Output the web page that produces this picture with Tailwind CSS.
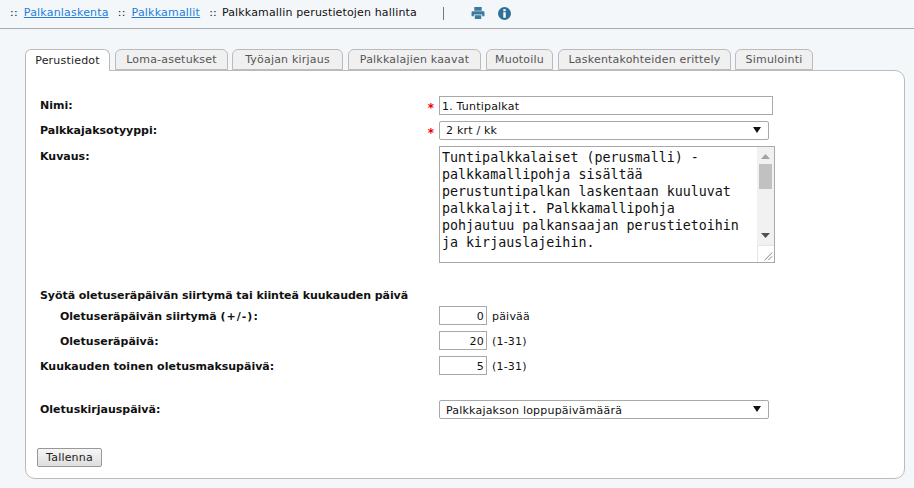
<!DOCTYPE html>
<html lang="fi">
<head>
  <meta charset="UTF-8" />
  <title>Palkkamallin perustietojen hallinta</title>
  <script src="https://cdn.jsdelivr.net/npm/@tailwindcss/browser@4"></script>
</head>
<body class="bg-[#f4f7fa] text-[#111] font-['DejaVu_Sans',sans-serif] text-[11px] tracking-[0.2px] w-[914px] h-[488px] overflow-hidden">

  <!-- Breadcrumb bar -->
  <header class="h-[29px] border-b border-[#aaa] flex items-center pl-[10px] pb-[3px] pt-[1px]">
    <span>::</span>
    <a href="#" class="ml-[6px] text-[#1f7fd6] underline">Palkanlaskenta</a>
    <span class="ml-[9px]">::</span>
    <a href="#" class="ml-[6px] text-[#1f7fd6] underline">Palkkamallit</a>
    <span class="ml-[9px]">::</span>
    <span class="ml-[5px] tracking-[0.15px]">Palkkamallin perustietojen hallinta</span>
    <span class="ml-[26px] w-px h-[13px] bg-[#777]"></span>
    <svg class="ml-[27px]" width="14" height="12" viewBox="0 0 14 13"><path fill="#3a7aa0" d="M3 0h8v4H3zM1 4.500h12a1 1 0 0 1 1 1V10h-2.500V8h-9v2H0V5.500a1 1 0 0 1 1-1zM3.500 9h7v4h-7z"/></svg>
    <svg class="ml-[13px]" width="13" height="13" viewBox="0 0 13 13"><circle cx="6.500" cy="6.500" r="6.500" fill="#2f7099"/><rect x="5.300" y="2.200" width="2.400" height="2" fill="#fff"/><rect x="5.300" y="5.200" width="2.400" height="5.500" fill="#fff"/></svg>
  </header>

  <main class="pl-[25px] pr-[9px] pt-[20px]">
    <!-- Tabs -->
    <nav class="flex h-[21px] relative z-10">
      <a class="w-[85px] h-[22px] pt-[2px] flex items-center justify-center bg-white border border-b-0 border-[#bbb] rounded-t-[6px] text-[#222]">Perustiedot</a>
      <a class="ml-[5px] w-[113px] h-[21px] pt-[2px] flex items-center justify-center bg-[#f0f0f0] border border-[#bbb] rounded-t-[6px] text-[#555]">Loma-asetukset</a>
      <a class="ml-[4px] w-[111px] h-[21px] pt-[2px] flex items-center justify-center bg-[#f0f0f0] border border-[#bbb] rounded-t-[6px] text-[#555]">Työajan kirjaus</a>
      <a class="ml-[5px] w-[133px] h-[21px] pt-[2px] flex items-center justify-center bg-[#f0f0f0] border border-[#bbb] rounded-t-[6px] text-[#555]">Palkkalajien kaavat</a>
      <a class="ml-[5px] w-[67px] h-[21px] pt-[2px] flex items-center justify-center bg-[#f0f0f0] border border-[#bbb] rounded-t-[6px] text-[#555]">Muotoilu</a>
      <a class="ml-[5px] w-[173px] h-[21px] pt-[2px] flex items-center justify-center bg-[#f0f0f0] border border-[#bbb] rounded-t-[6px] text-[#555]">Laskentakohteiden erittely</a>
      <a class="ml-[4px] w-[78px] h-[21px] pt-[2px] flex items-center justify-center bg-[#f0f0f0] border border-[#bbb] rounded-t-[6px] text-[#555]">Simulointi</a>
    </nav>

    <!-- Panel -->
    <form class="h-[409px] bg-white border border-[#bbb] rounded-b-[10px] rounded-tr-[10px] pl-[14px] pr-[14px] pt-[25px]">
      <div class="flex items-center h-[19px]">
        <label class="w-[399px] pt-[3px] font-bold tracking-normal flex justify-between pr-[5px]">Nimi:<span class="text-[12px] text-[#e00] mt-[1px]">*</span></label>
        <input value="1. Tuntipalkat" class="w-[334px] h-[19px] border border-[#a9a9a9] px-[2px] pt-[1px] outline-none" />
      </div>

      <div class="flex items-center h-[19px] mt-[6px]">
        <label class="w-[399px] pt-[3px] font-bold tracking-normal flex justify-between pr-[5px]">Palkkajaksotyyppi:<span class="text-[12px] text-[#e00] mt-[1px]">*</span></label>
        <div class="relative w-[330px] h-[19px]">
          <select class="appearance-none w-full h-full border border-[#a9a9a9] rounded-[2px] pl-[6px] pt-[1px] bg-white outline-none"><option>2 krt / kk</option></select>
          <svg class="absolute right-[8px] top-[6px]" width="8" height="6" viewBox="0 0 8 6"><path d="M0 0h8L4 6z" fill="#111"/></svg>
        </div>
      </div>

      <div class="flex mt-[6px] h-[117px]">
        <label class="w-[399px] font-bold tracking-normal pt-[3px]">Kuvaus:</label>
        <div class="relative w-[336px] h-[117px]">
          <textarea class="block w-full h-full border border-[#a9a9a9] pl-[2px] pt-[2px] pr-[30px] resize-none overflow-hidden outline-none tracking-normal font-['DejaVu_Sans_Mono',monospace] text-[13.33px] leading-[17px]">Tuntipalkkalaiset (perusmalli) - palkkamallipohja sisältää perustuntipalkan laskentaan kuuluvat palkkalajit. Palkkamallipohja pohjautuu palkansaajan perustietoihin ja kirjauslajeihin.</textarea>
          <!-- scrollbar -->
          <div class="absolute right-[1px] top-[1px] w-[17px] h-[98px] bg-[#f1f1f1]">
            <svg class="absolute left-[4px] top-[7px]" width="9" height="5" viewBox="0 0 9 5"><path d="M4.500 0L9 5H0z" fill="#a3a3a3"/></svg>
            <div class="absolute left-[2px] top-[17px] w-[13px] h-[25px] bg-[#c1c1c1]"></div>
            <svg class="absolute left-[4px] bottom-[7px]" width="9" height="5" viewBox="0 0 9 5"><path d="M0 0h9L4.500 5z" fill="#505050"/></svg>
          </div>
          <!-- resize corner -->
          <svg class="absolute right-[1px] bottom-[1px] bg-white border-l border-t border-[#e4e4e4]" width="17" height="17" viewBox="0 0 17 17"><path d="M7 15L15 7M11 15L15 11" stroke="#777" stroke-width="1" fill="none"/></svg>
        </div>
      </div>

      <h3 class="font-bold tracking-[-0.05px] mt-[26px] h-[14px] leading-[14px]">Syötä oletuseräpäivän siirtymä tai kiinteä kuukauden päivä</h3>

      <div class="flex items-center h-[19px] mt-[3px]">
        <label class="w-[399px] pt-[3px] font-bold tracking-normal pl-[20px]">Oletuseräpäivän siirtymä <span class="tracking-[1px]">(+/-)</span>:</label>
        <input value="0" class="w-[48px] h-[19px] border border-[#a9a9a9] text-right pr-[2px] pt-[2px] outline-none" />
        <span class="ml-[5px] pt-[3px]">päivää</span>
      </div>
      <div class="flex items-center h-[19px] mt-[6px]">
        <label class="w-[399px] pt-[3px] font-bold tracking-normal pl-[20px]">Oletuseräpäivä:</label>
        <input value="20" class="w-[48px] h-[19px] border border-[#a9a9a9] text-right pr-[2px] pt-[2px] outline-none" />
        <span class="ml-[5px] pt-[3px]">(1-31)</span>
      </div>
      <div class="flex items-center h-[19px] mt-[6px]">
        <label class="w-[399px] pt-[3px] font-bold tracking-normal">Kuukauden toinen oletusmaksupäivä:</label>
        <input value="5" class="w-[48px] h-[19px] border border-[#a9a9a9] text-right pr-[2px] pt-[2px] outline-none" />
        <span class="ml-[5px] pt-[3px]">(1-31)</span>
      </div>

      <div class="flex items-center h-[19px] mt-[25px]">
        <label class="w-[399px] pt-[2px] font-bold tracking-normal">Oletuskirjauspäivä:</label>
        <div class="relative w-[330px] h-[19px]">
          <select class="appearance-none w-full h-full border border-[#a9a9a9] rounded-[2px] pl-[6px] pt-[2px] bg-white outline-none"><option>Palkkajakson loppupäivämäärä</option></select>
          <svg class="absolute right-[8px] top-[6px]" width="8" height="6" viewBox="0 0 8 6"><path d="M0 0h8L4 6z" fill="#111"/></svg>
        </div>
      </div>

      <button type="button" class="block mt-[29px] -ml-[3px] w-[65px] h-[19px] pt-[1px] border border-[#999] rounded-[2px] bg-gradient-to-b from-[#f6f6f6] to-[#dedede] text-[#222]">Tallenna</button>
    </form>
  </main>
</body>
</html>
